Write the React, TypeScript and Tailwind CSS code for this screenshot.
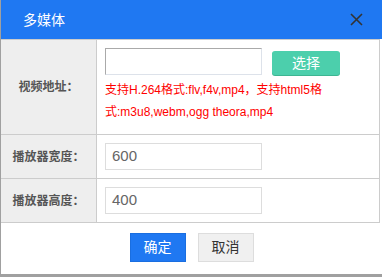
import React from "react";

const font = { fontFamily: '"Liberation Sans", "Noto Sans CJK SC", sans-serif' };

export default function App() {
  return (
    <div className="w-[382px] h-[277px] bg-[#a0a0a0] overflow-hidden" style={font}>
      <div className="ml-px w-[381px] h-[274px] bg-white flex flex-col">
        <div className="h-[39px] bg-[#1f78f2] flex items-center justify-between pl-[22px] pr-[19px] shrink-0">
          <span className="text-white text-[14px] leading-none">多媒体</span>
          <svg width="13" height="13" viewBox="0 0 13 13">
            <path d="M1 1 L12 12 M12 1 L1 12" stroke="#333" strokeWidth="1.6" />
          </svg>
        </div>
        <div className="w-[379px] border border-t border-[#cccccc] border-r-[#cccccc] border-l-0 border-b">
          <div className="grid grid-cols-[96px_1fr] h-[95px] border-b border-[#cccccc]">
            <div className="bg-[#eeeeee] border-r border-[#cccccc] flex items-center justify-center text-[12px] font-bold text-[#555]">视频地址：</div>
            <div className="pl-2 pt-2">
              <div className="flex items-start">
                <div className="w-[157px] h-[27px] border border-[#dde2ea] border-t-[#aaaaaa] border-l-[#aaaaaa]" />
                <div className="ml-[10px] mt-[3px] w-[68px] h-[24px] rounded-[3px] bg-[#4ccfac] shadow-[0_1px_0_#3db592] text-white text-[14px] flex items-center justify-center">选择</div>
              </div>
              <div className="mt-[4px] text-[12px] leading-[22px] text-[#ff0000] whitespace-nowrap">
                <div>支持H.264格式:flv,f4v,mp4，支持html5格</div>
                <div>式:m3u8,webm,ogg theora,mp4</div>
              </div>
            </div>
          </div>
          <div className="grid grid-cols-[96px_1fr] h-[44px] border-b border-[#cccccc]">
            <div className="bg-[#eeeeee] border-r border-[#cccccc] flex items-center justify-center text-[12px] font-bold text-[#555]">播放器宽度：</div>
            <div className="pl-2 flex items-center">
              <div className="w-[157px] h-[27px] border border-[#dddddd] flex items-center pl-[6px] text-[15px] text-[#666]">600</div>
            </div>
          </div>
          <div className="grid grid-cols-[96px_1fr] h-[43px]">
            <div className="bg-[#eeeeee] border-r border-[#cccccc] flex items-center justify-center text-[12px] font-bold text-[#555]">播放器高度：</div>
            <div className="pl-2 flex items-center">
              <div className="w-[157px] h-[27px] border border-[#dddddd] flex items-center pl-[6px] text-[15px] text-[#666]">400</div>
            </div>
          </div>
        </div>
        <div className="flex justify-center gap-[12px] mt-[10px]">
          <div className="w-[56px] h-[29px] bg-[#1f78f2] border border-[#1a6ee0] text-white text-[14px] flex items-center justify-center">确定</div>
          <div className="w-[56px] h-[29px] bg-[#f0f0f0] border border-[#dddddd] text-[#333] text-[14px] flex items-center justify-center">取消</div>
        </div>
      </div>
    </div>
  );
}
